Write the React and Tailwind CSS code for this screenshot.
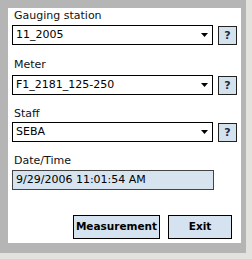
import React from "react";

const font = { fontFamily: '"DejaVu Sans", Verdana, sans-serif' };

function Arrow() {
  return (
    <svg width="7" height="4" viewBox="0 0 7 4" className="block">
      <polygon points="0,0 7,0 3.5,4" fill="#000" />
    </svg>
  );
}

function SelectRow({ value }) {
  return (
    <div className="flex items-center">
      <div className="w-[202px] h-[20px] border border-black bg-white flex items-center justify-between pl-[3px] pr-[4px]">
        <span className="text-[11px] leading-[14px] text-black">{value}</span>
        <Arrow />
      </div>
      <div className="ml-[5px] w-[19px] h-[19px] border border-[#222] bg-[#d4e2ee] flex items-center justify-center text-[11px] font-bold text-[#1b2b44] leading-none">
        ?
      </div>
    </div>
  );
}

function Label({ children, className }) {
  return (
    <div className={"h-[14px] text-[11px] leading-[14px] text-[#111] " + className}>{children}</div>
  );
}

export default function App() {
  return (
    <div className="w-[252px] h-[259px] bg-[#e4e2de] overflow-hidden" style={font}>
      <div className="w-[246px] h-[253px] bg-[#b5b5b5] pl-[8px] pt-[8px]">
        <div className="w-[233px] h-[235px] bg-white px-[4px] pt-[1px] flex flex-col">
          <Label className="pl-[2px]">Gauging station</Label>
          <div className="mt-[2px]">
            <SelectRow value="11_2005" />
          </div>
          <Label className="pl-[2px] mt-[13px]">Meter</Label>
          <div className="mt-[3px]">
            <SelectRow value="F1_2181_125-250" />
          </div>
          <Label className="pl-[2px] mt-[12px]">Staff</Label>
          <div className="mt-[1px]">
            <SelectRow value="SEBA" />
          </div>
          <Label className="pl-[2px] mt-[12px]">Date/Time</Label>
          <div className="mt-[2px] w-[202px] h-[20px] border border-[#444] bg-[#d7e4f0] flex items-center pl-[3px]">
            <span className="text-[11px] leading-[14px] text-black">9/29/2006 11:01:54 AM</span>
          </div>
          <div className="mt-[25px] flex ml-[61px] gap-[8px]">
            <div className="w-[87px] h-[24px] border border-black bg-[#d5e3f0] flex items-center justify-center text-[10.5px] font-bold text-black">
              Measurement
            </div>
            <div className="w-[64px] h-[24px] border border-black bg-[#d5e3f0] flex items-center justify-center text-[10.5px] font-bold text-black">
              Exit
            </div>
          </div>
        </div>
      </div>
    </div>
  );
}
